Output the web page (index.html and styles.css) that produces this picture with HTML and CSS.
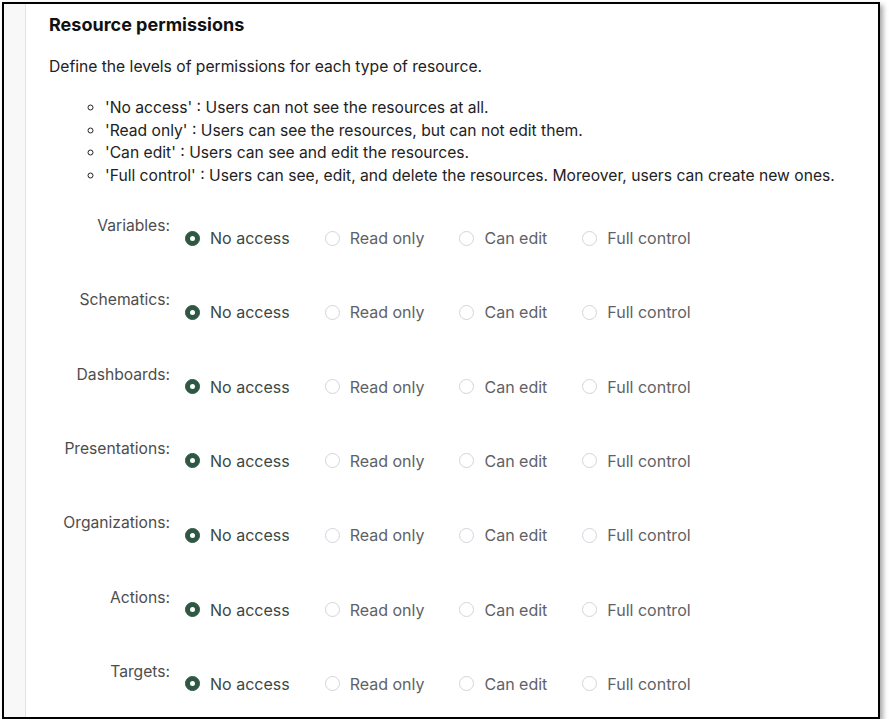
FILE: index.html
```
<!DOCTYPE html>
<html lang="en">
<head>
<meta charset="utf-8">
<title>Resource permissions</title>
<link rel="stylesheet" href="styles.css">
</head>
<body>
<div class="frame">
  <div class="gutter"></div>
  <div class="content">
    <h2 class="title">Resource permissions</h2>
    <p class="intro">Define the levels of permissions for each type of resource.</p>
    <ul class="levels">
      <li>'No access' : Users can not see the resources at all.</li>
      <li>'Read only' : Users can see the resources, but can not edit them.</li>
      <li>'Can edit' : Users can see and edit the resources.</li>
      <li>'Full control' : Users can see, edit, and delete the resources. Moreover, users can create new ones.</li>
    </ul>

    <div class="form-item">
      <div class="label">Variables:</div>
      <div class="radios">
        <label class="radio checked"><span class="circle"></span><span class="text">No access</span></label>
        <label class="radio"><span class="circle"></span><span class="text">Read only</span></label>
        <label class="radio"><span class="circle"></span><span class="text">Can edit</span></label>
        <label class="radio"><span class="circle"></span><span class="text">Full control</span></label>
      </div>
    </div>
    <div class="form-item">
      <div class="label">Schematics:</div>
      <div class="radios">
        <label class="radio checked"><span class="circle"></span><span class="text">No access</span></label>
        <label class="radio"><span class="circle"></span><span class="text">Read only</span></label>
        <label class="radio"><span class="circle"></span><span class="text">Can edit</span></label>
        <label class="radio"><span class="circle"></span><span class="text">Full control</span></label>
      </div>
    </div>
    <div class="form-item">
      <div class="label">Dashboards:</div>
      <div class="radios">
        <label class="radio checked"><span class="circle"></span><span class="text">No access</span></label>
        <label class="radio"><span class="circle"></span><span class="text">Read only</span></label>
        <label class="radio"><span class="circle"></span><span class="text">Can edit</span></label>
        <label class="radio"><span class="circle"></span><span class="text">Full control</span></label>
      </div>
    </div>
    <div class="form-item">
      <div class="label">Presentations:</div>
      <div class="radios">
        <label class="radio checked"><span class="circle"></span><span class="text">No access</span></label>
        <label class="radio"><span class="circle"></span><span class="text">Read only</span></label>
        <label class="radio"><span class="circle"></span><span class="text">Can edit</span></label>
        <label class="radio"><span class="circle"></span><span class="text">Full control</span></label>
      </div>
    </div>
    <div class="form-item">
      <div class="label">Organizations:</div>
      <div class="radios">
        <label class="radio checked"><span class="circle"></span><span class="text">No access</span></label>
        <label class="radio"><span class="circle"></span><span class="text">Read only</span></label>
        <label class="radio"><span class="circle"></span><span class="text">Can edit</span></label>
        <label class="radio"><span class="circle"></span><span class="text">Full control</span></label>
      </div>
    </div>
    <div class="form-item">
      <div class="label">Actions:</div>
      <div class="radios">
        <label class="radio checked"><span class="circle"></span><span class="text">No access</span></label>
        <label class="radio"><span class="circle"></span><span class="text">Read only</span></label>
        <label class="radio"><span class="circle"></span><span class="text">Can edit</span></label>
        <label class="radio"><span class="circle"></span><span class="text">Full control</span></label>
      </div>
    </div>
    <div class="form-item">
      <div class="label">Targets:</div>
      <div class="radios">
        <label class="radio checked"><span class="circle"></span><span class="text">No access</span></label>
        <label class="radio"><span class="circle"></span><span class="text">Read only</span></label>
        <label class="radio"><span class="circle"></span><span class="text">Can edit</span></label>
        <label class="radio"><span class="circle"></span><span class="text">Full control</span></label>
      </div>
    </div>
  </div>
</div>
</body>
</html>
```
FILE: styles.css
```
html, body {
  margin: 0;
  padding: 0;
  background: #ffffff;
}

body {
  font-family: Inter, "Noto Sans", "Liberation Sans", sans-serif;
  color: #222222;
}

.frame {
  margin: 2px 0 0 2px;
  width: 874px;
  height: 713px;
  border: 2px solid #000000;
  box-shadow: 3px 3px 5px rgba(0, 0, 0, 0.35);
  display: flex;
  overflow: hidden;
  background: #ffffff;
}

.gutter {
  width: 21px;
  flex: none;
  background: #f8f8f8;
  border-right: 1px solid #e2e2e2;
}

.content {
  flex: 1;
  padding: 9px 0 0 23px;
}

.title {
  margin: 0;
  font-size: 18px;
  line-height: 24px;
  font-weight: 700;
  color: #111111;
}

.intro {
  margin: 19px 0 0;
  font-size: 15.65px;
  line-height: 22px;
  color: #222222;
}

.levels {
  margin: 19px 0 28px;
  padding-left: 56px;
  list-style: circle;
  font-size: 15.65px;
  line-height: 22.5px;
  color: #222222;
}

.form-item {
  display: grid;
  grid-template-columns: 121px auto;
  column-gap: 15px;
  height: 74.33px;
}

.label {
  text-align: right;
  font-size: 15.65px;
  line-height: 22px;
  color: #4d4d4d;
}

.radios {
  display: flex;
  align-items: center;
  margin-top: 12px;
  height: 22px;
}

.radio {
  display: inline-flex;
  align-items: center;
  gap: 10px;
  margin-right: 35px;
  font-size: 16px;
  line-height: 22px;
  color: #606266;
}

.circle {
  box-sizing: border-box;
  width: 15px;
  height: 15px;
  border-radius: 50%;
  border: 1px solid #d2d5dc;
  background: #ffffff;
  display: inline-flex;
  align-items: center;
  justify-content: center;
}

.radio.checked .circle {
  border-color: #2e5843;
  background: #2e5843;
}

.radio.checked .circle::after {
  content: "";
  width: 5px;
  height: 5px;
  border-radius: 50%;
  background: #ffffff;
}

.radio.checked .text {
  color: #3b4743;
}
```
